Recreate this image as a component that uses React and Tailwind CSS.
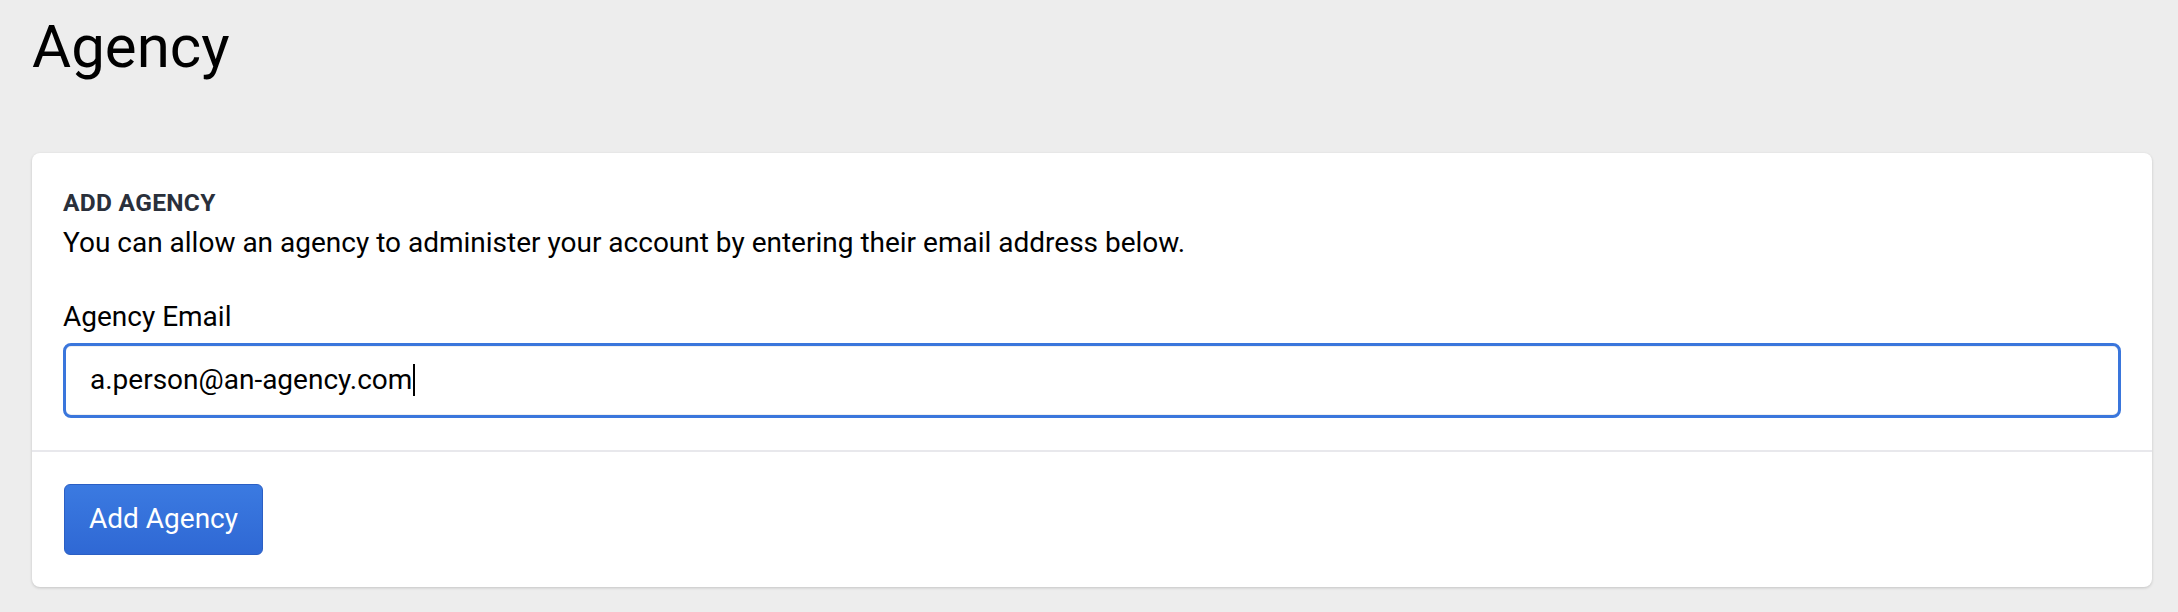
export default function App() {
  return (
    <div
      className="min-h-[612px] bg-[#ededed] pb-6 pl-8 pr-[26px] text-black"
      style={{ fontFamily: 'Roboto, "Liberation Sans", sans-serif' }}
    >
      <h1 className="pt-[17px] text-[60px] font-normal leading-[60px] text-black">Agency</h1>

      <div className="mt-[76px] rounded-[8px] bg-white shadow-[0_1px_3px_rgba(0,0,0,0.18)]">
        <div className="px-[31px] pt-8 pb-8">
          <h2 className="text-[24.5px] font-bold leading-[36.75px] tracking-[0.3px] text-[#2a303b]">
            ADD AGENCY
          </h2>
          <p className="text-[28px] leading-[42px]">
            You can allow an agency to administer your account by entering their email address below.
          </p>

          <label className="mt-8 block text-[28px] leading-[42px]">Agency Email</label>
          <div className="mt-[5px] flex h-[75px] items-center rounded-[8px] border-[3px] border-[#3a76dc] bg-white px-[24px] shadow-[inset_0_1px_0_#f0f0f0,inset_0_-1px_0_#f0f0f0]">
            <span className="text-[28px] leading-[42px]">a.person@an-agency.com</span>
            <span className="ml-[1px] inline-block h-[32px] w-[2px] bg-black" />
          </div>
        </div>

        <div className="h-[2px] bg-[#e8e8ec]" />

        <div className="px-[32px] py-8">
          <button
            type="button"
            className="flex h-[71px] w-[199px] items-center justify-center rounded-[6px] border border-[#2b5fc4] bg-gradient-to-b from-[#3b7ae1] to-[#2f68d4] text-[28px] leading-[42px] text-white"
          >
            Add Agency
          </button>
        </div>
      </div>
    </div>
  )
}
